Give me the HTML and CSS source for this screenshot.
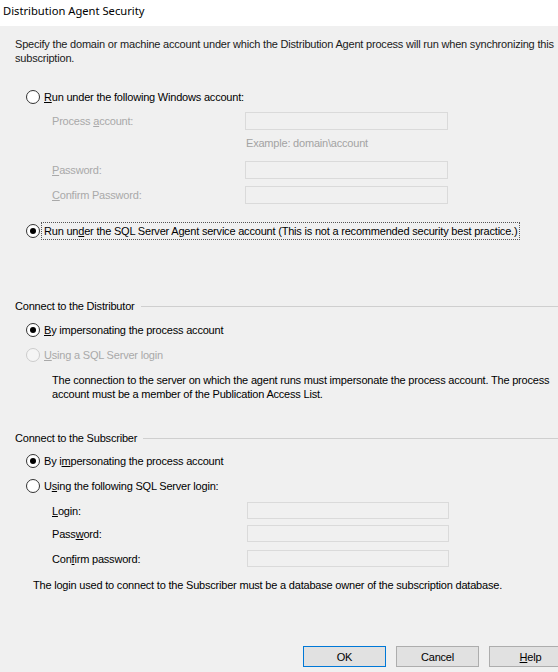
FILE: index.html
```html
<!DOCTYPE html>
<html>
<head>
<meta charset="utf-8">
<link rel="stylesheet" href="styles.css">
</head>
<body>
<div class="window">
  <div class="titlebar">Distribution Agent Security</div>
  <div class="body">
    <p class="desc">Specify the domain or machine account under which the Distribution Agent process will run when synchronizing this subscription.</p>

    <div class="radio-row r1"><span class="radio"></span><span class="label"><u>R</u>un under the following Windows account:</span></div>
    <div class="field-row f-process disabled"><span class="flabel">Process <u>a</u>ccount:</span><span class="textbox"></span></div>
    <div class="hint">Example: domain\account</div>
    <div class="field-row f-pass disabled"><span class="flabel"><u>P</u>assword:</span><span class="textbox"></span></div>
    <div class="field-row f-confirm disabled"><span class="flabel"><u>C</u>onfirm Password:</span><span class="textbox"></span></div>

    <div class="radio-row r2"><span class="radio checked"></span><span class="label focus">Run un<u>d</u>er the SQL Server Agent service account (This is not a recommended security best practice.)</span></div>

    <div class="group-head g1"><span class="gtext">Connect to the Distributor</span><span class="gline"></span></div>
    <div class="radio-row r3"><span class="radio checked"></span><span class="label"><u>B</u>y impersonating the process account</span></div>
    <div class="radio-row r4 disabled"><span class="radio"></span><span class="label"><u>U</u>sing a SQL Server login</span></div>
    <p class="note n1">The connection to the server on which the agent runs must impersonate the process account. The process account must be a member of the Publication Access List.</p>

    <div class="group-head g2"><span class="gtext">Connect to the Subscriber</span><span class="gline"></span></div>
    <div class="radio-row r5"><span class="radio checked"></span><span class="label">By i<u>m</u>personating the process account</span></div>
    <div class="radio-row r6"><span class="radio"></span><span class="label">U<u>s</u>ing the following SQL Server login:</span></div>
    <div class="field-row sub f-login"><span class="flabel"><u>L</u>ogin:</span><span class="textbox"></span></div>
    <div class="field-row sub f-spass"><span class="flabel">Pass<u>w</u>ord:</span><span class="textbox"></span></div>
    <div class="field-row sub f-sconf"><span class="flabel">Con<u>f</u>irm password:</span><span class="textbox"></span></div>
    <p class="note n2">The login used to connect to the Subscriber must be a database owner of the subscription database.</p>

    <div class="buttons">
      <button class="btn default">OK</button>
      <button class="btn">Cancel</button>
      <button class="btn"><u>H</u>elp</button>
    </div>
  </div>
</div>
</body>
</html>
```

FILE: styles.css
```css
* { box-sizing: border-box; }
html, body { margin: 0; padding: 0; }
body {
  width: 558px;
  height: 672px;
  overflow: hidden;
  background: #f0f0f0;
  font-family: "Liberation Sans", Arial, sans-serif;
  font-size: 11px;
  letter-spacing: -0.2px;
  color: #000;
}
.window { display: flex; flex-direction: column; height: 672px; }
.titlebar {
  height: 26px;
  background: #fff;
  font-family: "Noto Sans", "Open Sans", sans-serif;
  font-size: 11.2px;
  letter-spacing: 0;
  line-height: 22px;
  padding-left: 3px;
  color: #000;
}
.body {
  flex: 1;
  display: flex;
  flex-direction: column;
  background: #f0f0f0;
}
p { margin: 0; }
u { text-decoration: underline; text-underline-offset: 1px; }

.desc {
  margin: 11px 0 0 15px;
  width: 545px;
  line-height: 14px;
  color: #1a1a1a;
}

.radio-row {
  display: flex;
  align-items: center;
  height: 18px;
  padding-left: 26px;
  white-space: nowrap;
}
.radio {
  width: 14px;
  height: 14px;
  border: 1px solid #333;
  border-radius: 50%;
  background: #fff;
  position: relative;
  flex: none;
}
.radio.checked::after {
  content: "";
  position: absolute;
  left: 3px;
  top: 3px;
  width: 6px;
  height: 6px;
  border-radius: 50%;
  background: #000;
}
.radio-row .label { margin-left: 4px; line-height: 14px; }
.radio-row .label.focus {
  margin-left: 1px;
  padding: 1px 2px;
  border: 1px dotted #555;
}
.radio-row.disabled .radio { border-color: #cccccc; background: #f5f5f5; }
.radio-row.disabled .label { color: #a9a9a9; }

.r1 { margin-top: 23px; }
.field-row {
  display: grid;
  grid-template-columns: 193px 203px;
  align-items: center;
  height: 18px;
  padding-left: 52px;
  white-space: nowrap;
}
.field-row .textbox {
  height: 18px;
  border: 1px solid #dadada;
  background: #f0f0f0;
}
.field-row.disabled .flabel { color: #a9a9a9; }
.f-process { margin-top: 6px; }
.hint {
  margin: 6px 0 0 246px;
  height: 14px;
  line-height: 14px;
  color: #a3a3a3;
}
.f-pass { margin-top: 11px; }
.f-confirm { margin-top: 7px; }
.r2 { margin-top: 18px; }

.group-head {
  display: flex;
  align-items: center;
  height: 14px;
  padding-left: 15px;
  white-space: nowrap;
}
.gtext { flex: none; line-height: 14px; }
.gline { flex: 1; height: 1px; background: #cfcfcf; margin-left: 6px; }
.g1 { margin-top: 59px; }
.r3 { margin-top: 8px; }
.r4 { margin-top: 7px; }
.note { line-height: 14px; }
.n1 { margin: 9px 0 0 52px; width: 505px; }
.g2 { margin-top: 30px; }
.r5 { margin-top: 7px; }
.r6 { margin-top: 7px; }
.field-row.sub { grid-template-columns: 195px 202px; height: 17px; }
.field-row.sub .textbox { height: 17px; }
.f-login { margin-top: 7px; }
.f-spass { margin-top: 6px; }
.f-sconf { margin-top: 8px; }
.n2 { margin: 11px 0 0 33px; white-space: nowrap; }

.buttons {
  margin-top: auto;
  margin-bottom: 5px;
  display: flex;
  gap: 10px;
  padding-left: 303px;
}
.btn {
  flex: none;
  width: 83px;
  height: 21px;
  padding: 0;
  border: 1px solid #adadad;
  background: #e1e1e1;
  font-family: "Liberation Sans", Arial, sans-serif;
  font-size: 11px;
  letter-spacing: -0.2px;
  color: #000;
}
.btn.default { border-color: #0078d7; }
```
